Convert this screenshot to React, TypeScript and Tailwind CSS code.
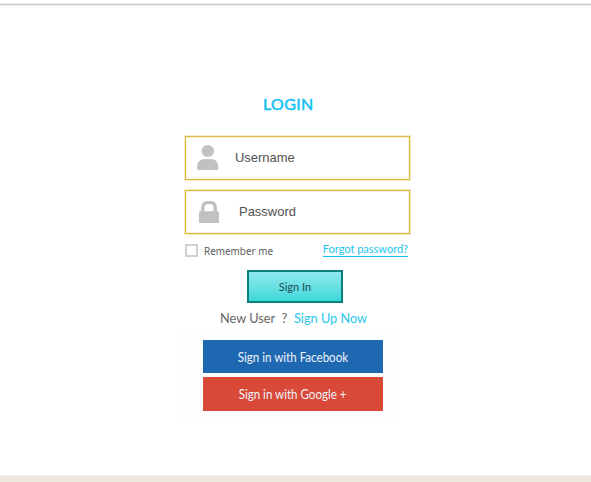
import React from "react";

function UserIcon() {
  return (
    <svg className="ml-[11px] h-[26px] w-[22px] shrink-0" viewBox="0 0 22 26" fill="#c1c1c1">
      <ellipse cx="10.8" cy="6" rx="6.3" ry="6" />
      <path d="M0.2 24v-2.4C0.2 17.5 2.6 14.6 6 14.2q4.8-.4 9.6 0c3.4.4 5.6 3.3 5.6 7.4V24q0 1-1 1H1.2q-1 0-1-1z" />
    </svg>
  );
}

function LockIcon() {
  return (
    <svg className="ml-[13px] h-[23px] w-5 shrink-0" viewBox="0 0 20 23" fill="#c1c1c1">
      <path d="M3.8 11V6.4c0-3.4 2.5-5 6.2-5s6.2 1.6 6.2 5V11" fill="none" stroke="#c1c1c1" strokeWidth="3.4" />
      <rect x="0" y="10.2" width="20" height="11.8" rx="1" />
    </svg>
  );
}

const field =
  "flex h-11 w-[225px] items-center border border-[#dcb93e] bg-white shadow-[0_0_0_1px_#f6ecc6,inset_0_0_0_1px_#faf4dd]";

export default function App() {
  return (
    <main className="flex h-[482px] w-[591px] flex-col overflow-hidden bg-white">
      <div className="mt-[3px] h-[3px] shrink-0 border-y border-[#eeeeee] bg-[#c9c9c9]" />
      <form className="flex grow flex-col" onSubmit={(e) => e.preventDefault()}>
        <h1 className="mt-[88px] ml-[263px] h-5 w-fit whitespace-nowrap font-['Lato',sans-serif] text-[16px] leading-5 font-normal tracking-[0.35px] text-[#12c2f2] [-webkit-text-stroke:0.5px_#12c2f2]">
          LOGIN
        </h1>

        <div className="mt-[22px] ml-[185px] flex flex-col gap-2.5 font-['Liberation_Sans',sans-serif] text-[13.5px] text-[#505050]">
          <label className={field}>
            <UserIcon />
            <span className="ml-4 origin-left scale-x-[0.96] pb-px leading-4">Username</span>
          </label>
          <label className={field}>
            <LockIcon />
            <span className="ml-5 origin-left scale-x-[0.96] pb-px leading-4">Password</span>
          </label>
        </div>

        <div className="mt-2 ml-[185px] flex h-6 w-[223px] justify-between">
          <label className="flex h-4 items-center pt-px">
            <span className="h-[13px] w-[13px] border-2 border-[#d0d0d0]" />
            <span className="ml-1.5 origin-left scale-x-[0.9] font-['Noto_Sans',sans-serif] text-[11px] leading-4 text-[#5c5c5c]">
              Remember me
            </span>
          </label>
          <a className="h-[15px] border-b border-[#12c2f2] font-['Lato',sans-serif] text-[11px] leading-[13px] text-[#22c4ef]">
            Forgot password?
          </a>
        </div>

        <button className="mt-1 ml-[247px] flex h-[33px] w-24 items-center justify-center border-2 border-[#0a7f80] bg-linear-to-b from-[#8ce8ee] to-[#38d8d9] pt-px font-['Lato',sans-serif] text-[11px] text-[#1b4d58]">
          Sign In
        </button>

        <p className="mt-[7px] ml-[220px] flex h-4 w-fit origin-left scale-x-[0.98] whitespace-pre font-['Lato',sans-serif] text-[13px] leading-4 text-[#666]">
          <span>New User  ?</span>
          <a className="ml-[7px] text-[#28c5ee]">Sign Up Now</a>
        </p>

        <div className="mt-[5px] ml-[176px] flex h-[93px] w-[224px] flex-col gap-1 bg-[#fefefe] pt-[9px] pl-[27px] font-['Lato',sans-serif] text-[13px] text-[#eef3f8]">
          <button className="flex h-[33px] w-[180px] shrink-0 items-center justify-center bg-[#1e68b2] pt-0.5">
            <span className="scale-x-[0.89]">Sign in with Facebook</span>
          </button>
          <button className="flex h-[34px] w-[180px] shrink-0 items-center justify-center bg-[#d94938] pt-0.5">
            <span className="scale-x-[0.89]">Sign in with Google +</span>
          </button>
        </div>
      </form>
      <footer className="h-[7px] shrink-0 border-t border-[#efedeb] bg-[#ece8dc]" />
    </main>
  );
}
